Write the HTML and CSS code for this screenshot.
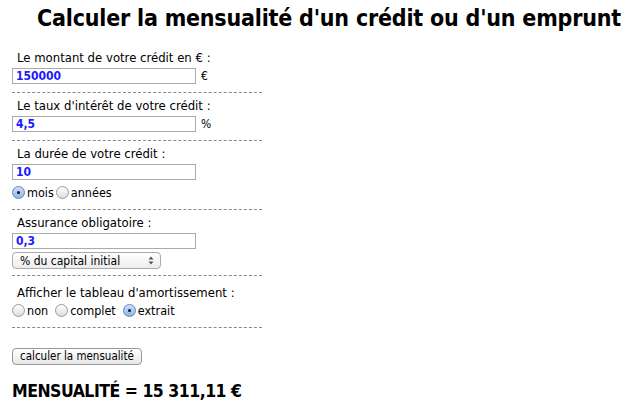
FILE: index.html
```html
<!DOCTYPE html>
<html lang="fr">
<head>
<meta charset="utf-8">
<link rel="stylesheet" href="styles.css">
</head>
<body>
<h1 class="title">Calculer la mensualité d'un crédit ou d'un emprunt</h1>
<form class="calc">
  <div class="field">
    <label class="lbl">Le montant de votre crédit en € :</label>
    <div class="row"><span class="input">150000</span><span class="unit">€</span></div>
  </div>
  <div class="field">
    <label class="lbl">Le taux d'intérêt de votre crédit :</label>
    <div class="row"><span class="input">4,5</span><span class="unit">%</span></div>
  </div>
  <div class="field">
    <label class="lbl">La durée de votre crédit :</label>
    <div class="row"><span class="input">10</span></div>
    <div class="radios">
      <span class="radio on"></span><span class="rtext">mois</span>
      <span class="radio"></span><span class="rtext">années</span>
    </div>
  </div>
  <div class="field field-select">
    <label class="lbl">Assurance obligatoire :</label>
    <div class="row"><span class="input">0,3</span></div>
    <div class="select"><span>% du capital initial</span><span class="arrows">
      <svg width="6" height="9" viewBox="0 0 6 9"><path d="M0.5 3.5 L3 0.5 L5.5 3.5 Z M0.5 5.5 L3 8.5 L5.5 5.5 Z" fill="#555"/></svg>
    </span></div>
  </div>
  <div class="field field-table">
    <label class="lbl">Afficher le tableau d'amortissement :</label>
    <div class="radios">
      <span class="radio"></span><span class="rtext gap">non</span>
      <span class="radio"></span><span class="rtext gap">complet</span>
      <span class="radio on"></span><span class="rtext">extrait</span>
    </div>
  </div>
  <div class="actions">
    <span class="button">calculer la mensualité</span>
  </div>
  <h2 class="result">MENSUALITÉ = 15 311,11 €</h2>
</form>
</body>
</html>
```
FILE: styles.css
```css
html, body { margin: 0; padding: 0; background: #fff; }
body {
  font-family: "DejaVu Sans Condensed", "DejaVu Sans", sans-serif;
  font-size: 12px;
  color: #000;
  padding: 0 8px;
}
.title {
  margin: 0;
  padding: 4px 0 0 18px;
  height: 36px;
  text-align: center;
  font-size: 23px;
  font-weight: bold;
  line-height: 28px;
  letter-spacing: -0.2px;
}
.calc { padding: 5px 0 0 4px; width: 250px; }
.field {
  border-bottom: 1px dashed #888;
  padding: 5px 0 8px 0;
}
.field-select { padding-bottom: 6px; }
.field-table { padding-top: 9px; padding-bottom: 8px; }
.lbl { display: block; padding-left: 5px; font-size: 13px; line-height: 16px; margin-bottom: 2px; }
.row { display: flex; align-items: center; gap: 5px; height: 16px; }
.input {
  display: block;
  box-sizing: border-box;
  width: 184px;
  height: 16px;
  border: 1px solid #aaa;
  color: #1a1aff;
  font-weight: bold;
  font-size: 12px;
  line-height: 14px;
  padding-left: 3px;
}
.unit { font-size: 12px; }
.radios { display: flex; align-items: center; height: 18px; margin-top: 3px; font-size: 12.5px; }
.field-table .radios { margin-top: -2px; }
.radio {
  display: inline-block;
  box-sizing: border-box;
  width: 13px; height: 13px;
  border-radius: 50%;
  border: 1px solid #999;
  background: linear-gradient(#fff, #ddd);
  margin-right: 2px;
  position: relative;
}
.radio.on { border-color: #5c86c8; background: linear-gradient(#cfe0f7, #8fb4e8); }
.radio.on::after {
  content: ""; position: absolute; left: 4px; top: 4px;
  width: 3px; height: 3px; border-radius: 50%; background: #111;
}
.rtext { margin-right: 2px; }
.rtext.gap { margin-right: 7px; }
.select {
  display: flex; justify-content: space-between; align-items: center;
  box-sizing: border-box;
  width: 149px; height: 17px; margin-top: 3px;
  border: 1px solid #aaa; border-radius: 4px;
  background: linear-gradient(#fff, #ececec);
  padding: 0 6px 0 7px;
  font-size: 12px;
}
.arrows { display: flex; }
.actions { padding-top: 20px; }
.button {
  display: inline-block;
  box-sizing: border-box;
  height: 17px; padding: 0 7px;
  border: 1px solid #999; border-radius: 4px;
  background: linear-gradient(#fff, #e6e6e6);
  font-size: 11.5px; line-height: 15px;
}
.result {
  margin: 15px 0 0 0;
  font-size: 17.5px; font-weight: bold; line-height: 22px;
  letter-spacing: -0.5px;
}
```
